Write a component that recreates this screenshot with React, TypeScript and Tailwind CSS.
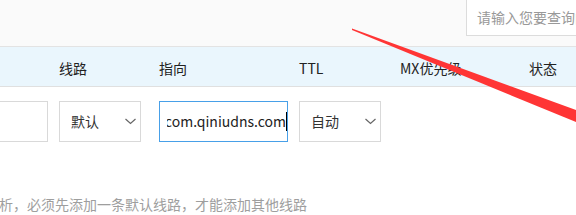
import React from "react";

const font = { fontFamily: '"Noto Sans CJK SC", "Noto Sans", sans-serif' };

function Chevron() {
  return (
    <svg width="11" height="7" viewBox="0 0 11 7" className="shrink-0">
      <path d="M0.5 1 L5.5 5.5 L10.5 1" fill="none" stroke="#666" strokeWidth="1.2" />
    </svg>
  );
}

function SelectBox({ label }: { label: string }) {
  return (
    <div className="w-[82px] h-[41px] border border-[#d9d9d9] bg-white flex items-center justify-between pl-[11px] pr-[4px] text-[14px] text-[#333]">
      <span>{label}</span>
      <Chevron />
    </div>
  );
}

export default function App() {
  return (
    <div className="relative w-[576px] h-[215px] overflow-hidden bg-white" style={font}>
      {/* top toolbar with search */}
      <div className="h-[47px] bg-[#fafafa] border-b border-[#e3e3e3] flex justify-end">
        <div className="w-[130px] h-[36px] -mr-[20px] bg-white border border-t-0 border-[#dcdcdc] flex items-center pl-[10px] text-[14px] text-[#999] whitespace-nowrap overflow-hidden">
          请输入您要查询的域名
        </div>
      </div>

      {/* table header */}
      <div className="h-[40px] bg-[#eaf6fd] border-b border-[#e0e0e0] grid grid-cols-[59px_100px_140px_101px_129px_1fr] items-center pt-[3px] text-[14px] text-[#222]">
        <div />
        <div>线路</div>
        <div>指向</div>
        <div>TTL</div>
        <div>MX优先级</div>
        <div>状态</div>
      </div>

      {/* edit row */}
      <div className="mt-[14px] grid grid-cols-[59px_100px_140px_101px_129px_1fr] items-start">
        <div>
          <div className="w-[60px] -ml-[12px] h-[41px] border border-[#d9d9d9] bg-white" />
        </div>
        <div>
          <SelectBox label="默认" />
        </div>
        <div>
          <div className="w-[129px] h-[41px] border border-[#48a0e8] bg-white pl-[7px] flex items-center">
            <div className="flex-1 overflow-hidden flex justify-end items-center whitespace-nowrap text-[14px] text-[#222]">
              <span>cdn.com.qiniudns.com</span>
              <span className="inline-block w-px h-[19px] bg-black shrink-0" />
            </div>
          </div>
        </div>
        <div>
          <SelectBox label="自动" />
        </div>
        <div />
        <div />
      </div>

      {/* hint */}
      <div className="mt-[52px] -ml-[15px] text-[14px] text-[#9e9e9e] whitespace-nowrap">
        解析，必须先添加一条默认线路，才能添加其他线路
      </div>

      {/* red annotation arrow */}
      <svg className="absolute left-0 top-0 pointer-events-none" width="576" height="215" viewBox="0 0 576 215">
        <polygon points="352,28.5 576,110 576,122 352,30" fill="#ff3535" />
      </svg>
    </div>
  );
}
